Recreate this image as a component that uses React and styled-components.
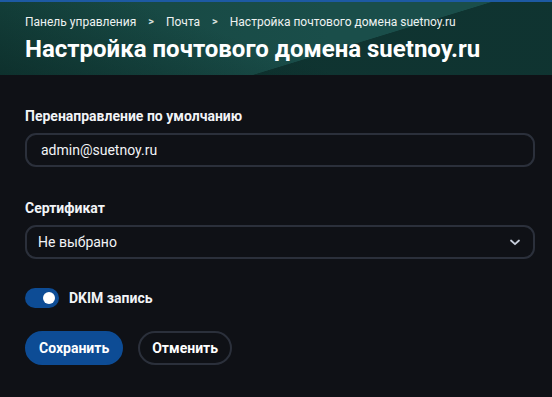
import React, { useState } from 'react'
import styled, { createGlobalStyle } from 'styled-components'

const GlobalStyle = createGlobalStyle`
  html, body {
    margin: 0;
    padding: 0;
    background: #0f1116;
    font-family: Roboto, "Noto Sans", sans-serif;
    color: #f2f4f7;
  }
  * { box-sizing: border-box; }
`

const Page = styled.div`
  min-height: 397px;
  background: #0f1116;
  border-top: 2px solid #1d5aa3;
`

const Header = styled.header`
  height: 73px;
  padding: 12px 25px 0;
  background:
    linear-gradient(163deg, transparent 62%, rgba(6, 30, 28, 0.55) 62.3%),
    linear-gradient(200deg, transparent 55%, rgba(8, 34, 32, 0.6) 100%),
    linear-gradient(90deg, #164640 0%, #1a4e4a 60%, #1a4e4a 100%);
`

const Crumbs = styled.nav`
  display: flex;
  align-items: center;
  gap: 12px;
  font-size: 12px;
  line-height: 16px;
  color: #eef2f1;
`

const Sep = styled.span`
  font-size: 11px;
  font-weight: 700;
  color: #d8e0de;
`

const Title = styled.h1`
  margin: 4px 0 0;
  font-size: 24px;
  line-height: 30px;
  font-weight: 700;
  color: #ffffff;
`

const Form = styled.div`
  padding: 33px 17px 0 25px;
  display: flex;
  flex-direction: column;
`

const Field = styled.div`
  display: flex;
  flex-direction: column;
  gap: 8px;
  margin-bottom: ${p => p.$mb || 0}px;
`

const Label = styled.label`
  font-size: 14px;
  line-height: 17px;
  font-weight: 700;
  color: #f2f4f7;
`

const Input = styled.input`
  height: 34px;
  width: 100%;
  padding: 0 14px;
  border: 2px solid #2b303b;
  border-radius: 11px;
  background: #0f1116;
  color: #f2f4f7;
  font-family: inherit;
  font-size: 14px;
  outline: none;
`

const Select = styled.div`
  height: 34px;
  width: 100%;
  padding: 0 12px 0 11px;
  border: 2px solid #2b303b;
  border-radius: 11px;
  display: flex;
  align-items: center;
  justify-content: space-between;
  font-size: 14px;
  color: #f2f4f7;
`

const ToggleRow = styled.div`
  display: flex;
  align-items: center;
  gap: 10px;
  margin-top: 29px;
`

const Track = styled.button`
  width: 34px;
  height: 20px;
  border: none;
  border-radius: 10px;
  padding: 0 4px;
  background: ${p => (p.$on ? '#0d4c95' : '#2b303b')};
  display: flex;
  align-items: center;
  justify-content: ${p => (p.$on ? 'flex-end' : 'flex-start')};
  cursor: pointer;
`

const Knob = styled.span`
  width: 12px;
  height: 12px;
  border-radius: 50%;
  background: #ffffff;
`

const ToggleText = styled.span`
  font-size: 14px;
  font-weight: 700;
`

const Actions = styled.div`
  display: flex;
  gap: 15px;
  margin-top: 23px;
`

const Button = styled.button`
  height: 34px;
  padding: 0 12px;
  border-radius: 17px;
  border: 2px solid ${p => (p.$primary ? '#0d4c95' : '#2b303b')};
  background: ${p => (p.$primary ? '#0d4c95' : 'transparent')};
  color: #ffffff;
  font-family: inherit;
  font-size: 14px;
  font-weight: 700;
  cursor: pointer;
`

export default function App() {
  const [dkim, setDkim] = useState(true)
  return (
    <Page>
      <GlobalStyle />
      <Header>
        <Crumbs>
          <span>Панель управления</span>
          <Sep>&gt;</Sep>
          <span>Почта</span>
          <Sep>&gt;</Sep>
          <span>Настройка почтового домена suetnoy.ru</span>
        </Crumbs>
        <Title>Настройка почтового домена suetnoy.ru</Title>
      </Header>
      <Form>
        <Field $mb={33}>
          <Label>Перенаправление по умолчанию</Label>
          <Input defaultValue="admin@suetnoy.ru" />
        </Field>
        <Field>
          <Label>Сертификат</Label>
          <Select>
            <span>Не выбрано</span>
            <svg width="12" height="12" viewBox="0 0 12 12" fill="none">
              <path d="M2 4.5L6 8.2L10 4.5" stroke="#c7cedb" strokeWidth="1.8" strokeLinecap="round" strokeLinejoin="round" />
            </svg>
          </Select>
        </Field>
        <ToggleRow>
          <Track $on={dkim} onClick={() => setDkim(!dkim)}>
            <Knob />
          </Track>
          <ToggleText>DKIM запись</ToggleText>
        </ToggleRow>
        <Actions>
          <Button $primary>Сохранить</Button>
          <Button>Отменить</Button>
        </Actions>
      </Form>
    </Page>
  )
}
